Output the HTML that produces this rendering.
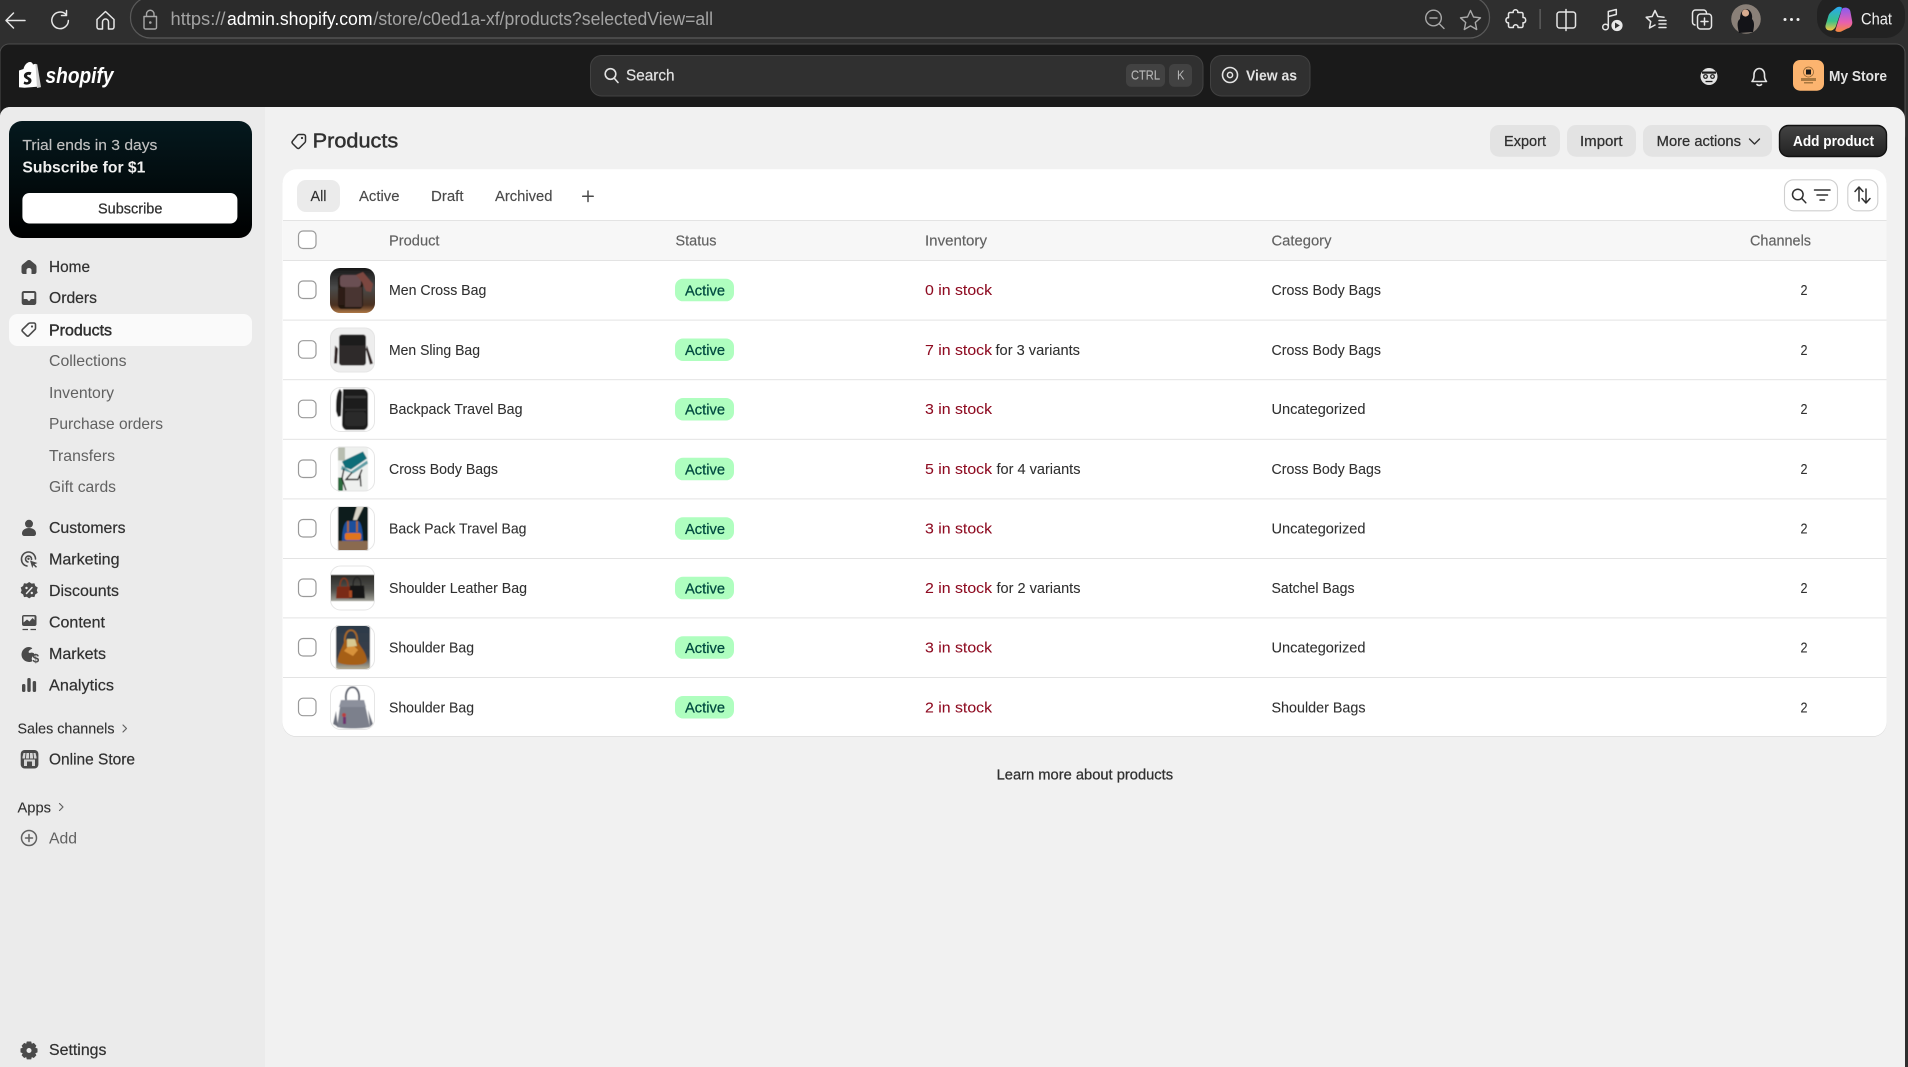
<!DOCTYPE html>
<html><head><meta charset="utf-8"><title>Products</title>
<style>
html,body{margin:0;padding:0;background:#2f2f2f;width:1908px;height:1067px;overflow:hidden}
svg{display:block}
text{font-family:"Liberation Sans",sans-serif;fill:#303030;white-space:pre}
.nav{font-size:15.6px;fill:#303030;stroke:#303030;stroke-width:.2}
.sub{font-size:15.6px;fill:#616161}
.th{font-size:14.5px;fill:#616161;stroke:#616161;stroke-width:.15}
.td{font-size:14.5px;fill:#303030;stroke:#303030;stroke-width:.08}
.inv{font-size:14.5px;fill:#8e0b21;stroke:#8e0b21;stroke-width:.05}
.bd{font-size:14.5px;fill:#014b40;stroke:#014b40;stroke-width:.25}
.btn{font-size:14.5px;fill:#303030;stroke:#303030;stroke-width:.25}
.tab{font-size:14.5px;fill:#4a4a4a;stroke:#4a4a4a;stroke-width:.15}
.ic{fill:#4a4a4a}
.ol{fill:none;stroke:#4a4a4a;stroke-width:1.6;stroke-linecap:round;stroke-linejoin:round}
.br{fill:none;stroke:#e6e6e6;stroke-width:1.5;stroke-linecap:round;stroke-linejoin:round}
.br2{fill:none;stroke:#a8a8a8;stroke-width:1.4;stroke-linecap:round;stroke-linejoin:round}
.wh{fill:none;stroke:#e3e3e3;stroke-width:1.6;stroke-linecap:round;stroke-linejoin:round}
</style></head><body>
<svg xmlns="http://www.w3.org/2000/svg" width="1908" height="1067" viewBox="0 0 1908 1067">
<defs>
<linearGradient id="card" x1="0" y1="0" x2="0" y2="1"><stop offset="0" stop-color="#05191e"/><stop offset="1" stop-color="#000"/></linearGradient>
<linearGradient id="addb" x1="0" y1="0" x2="0" y2="1"><stop offset="0" stop-color="#444"/><stop offset="1" stop-color="#222"/></linearGradient>
<linearGradient id="cop1" x1="0" y1="0" x2="0" y2="1"><stop offset="0" stop-color="#2aa7f0"/><stop offset=".6" stop-color="#37c28a"/><stop offset="1" stop-color="#f5c542"/></linearGradient>
<linearGradient id="cop2" x1="0" y1="0" x2="0" y2="1"><stop offset="0" stop-color="#8a5cf0"/><stop offset=".6" stop-color="#e85fb0"/><stop offset="1" stop-color="#f58a3c"/></linearGradient>
<linearGradient id="t1bg" x1="0" y1="0" x2="0" y2="1"><stop offset="0" stop-color="#141414"/><stop offset=".45" stop-color="#4a4a4a"/><stop offset=".8" stop-color="#4a3020"/><stop offset="1" stop-color="#c98a50"/></linearGradient>
<linearGradient id="t7bg" x1="0" y1="0" x2="0" y2="1"><stop offset="0" stop-color="#2c3a4a"/><stop offset=".7" stop-color="#3a4048"/><stop offset="1" stop-color="#c0b8a0"/></linearGradient>
<linearGradient id="t6bg" x1="0" y1="0" x2="0" y2="1"><stop offset="0" stop-color="#2a2a28"/><stop offset=".6" stop-color="#555550"/><stop offset="1" stop-color="#a0a098"/></linearGradient>
<clipPath id="tc"><rect width="45" height="45" rx="10"/></clipPath>
<filter id="bl" x="-5%" y="-5%" width="110%" height="110%"><feGaussianBlur stdDeviation=".6"/></filter>
<g id="cb"><rect x="298.5" y="-9" width="17.5" height="17.5" rx="4.5" fill="#fff" stroke="#9a9a9a" stroke-width="1.2"/></g>
<g id="badge"><rect x="675" y="-11.2" width="59" height="22.5" rx="8" fill="#affebf"/><text class="bd" x="685" y="5.3" textLength="40" lengthAdjust="spacingAndGlyphs">Active</text></g>
<rect id="tb" x=".5" y=".5" width="44" height="44" rx="10" fill="none" stroke="#e6e6e6"/>
</defs>

<!-- browser chrome -->
<rect width="1908" height="1067" fill="#2f2f2f"/>
<rect x="130.5" y="-3" width="1359" height="41" rx="20" fill="#2b2b2b" stroke="#5a5a5a" stroke-width="1.2"/>
<path class="br" d="M6 20.5H25M6 20.5l7.5-7.5M6 20.5l7.5 7.5"/>
<path class="br" d="M66 14.5a8.3 8.3 0 1 0 2.4 6M66.5 10.5v5h-5"/>
<path class="br" d="M97 19.5l8.5-8 8.5 8v7.5a2 2 0 0 1-2 2h-3.5v-7a3 3 0 0 0-6 0v7H99a2 2 0 0 1-2-2z"/>
<path class="br2" d="M144 16.5h12.5v11a1.5 1.5 0 0 1-1.500 1.500h-9.500a1.500 1.500 0 0 1-1.500-1.500zM146.500 16.500v-2.500a3.700 3.700 0 0 1 7.500 0v2.500"/>
<circle cx="150.300" cy="22.500" r="1.300" fill="#a8a8a8"/>
<text x="170.500" y="25" font-size="18" style="fill:#a3a3a3" textLength="55" lengthAdjust="spacingAndGlyphs">https://</text>
<text x="227" y="25" font-size="18" style="fill:#fff" textLength="145.500" lengthAdjust="spacingAndGlyphs">admin.shopify.com</text>
<text x="373.500" y="25" font-size="18" style="fill:#a3a3a3" textLength="339.500" lengthAdjust="spacingAndGlyphs">/store/c0ed1a-xf/products?selectedView=all</text>
<circle cx="1433.500" cy="18" r="7.800" class="br2"/><path class="br2" d="M1439.500 24l4.500 4.500M1430 18h7"/>
<path class="br2" d="M1470.500 10.500l3 6.500 7 .8-5.200 4.700 1.400 7-6.200-3.600-6.200 3.600 1.400-7-5.200-4.700 7-.8z"/>
<path class="br" d="M1511 13.500h3.200c-.7-3.600 5.300-3.600 4.600 0h3.700c.8 0 1.500.7 1.500 1.500v3.500c3.600-.7 3.600 6 0 5.200v3.300c0 .8-.7 1.500-1.500 1.500h-3.500c.6-3.600-5.300-3.600-4.600 0h-3.400c-.8 0-1.500-.7-1.500-1.500v-3.200c-3.400.6-3.400-5.800 0-5.100V15c0-.8.700-1.500 1.500-1.500z" transform="translate(-1 -1)"/>
<rect x="1539.500" y="9" width="1.200" height="20" fill="#666"/>
<rect x="1557" y="12" width="18.500" height="16" rx="2.500" class="br"/><path class="br" d="M1566 9.500v21"/>
<circle cx="1605.500" cy="27" r="2.800" class="br"/><path class="br" d="M1608.300 27V11.500l8-2v5l-8 2"/>
<circle cx="1617" cy="25.500" r="5.600" fill="#e8e8e8"/><path d="M1615 22.500v6l4.800-3z" fill="#2f2f2f"/>
<path class="br" d="M1655 10.500l2.800 6 6.200.8M1655 10.500l-2.800 6-6 .8 4.500 4.300-1.200 6.400 5.500-3"/><path class="br" d="M1659 20.500h7M1659 24h7M1659 27.500h7"/>
<path class="br" d="M1695 25a3 3 0 0 1-2.500-3v-9a3 3 0 0 1 3-3h8a3 3 0 0 1 3 3"/><rect x="1697.500" y="14" width="14" height="15" rx="3" class="br"/><path class="br" d="M1704.500 18v7M1701 21.500h7"/>
<circle cx="1746" cy="19" r="14.800" fill="#8a8078"/><path d="M1739 33c-2-8-2-12 1-14 0-5 2-10 6-10s7 5 6 10c3 3 2 8 1 13z" fill="#141418"/><circle cx="1745.500" cy="13" r="3.600" fill="#d8ac90"/>
<circle cx="1785" cy="19.500" r="1.500" fill="#eee"/><circle cx="1791.500" cy="19.500" r="1.500" fill="#eee"/><circle cx="1798" cy="19.500" r="1.500" fill="#eee"/>
<rect x="1817" y="-6" width="88" height="44" rx="19" fill="#222"/>
<path d="M1836 8c1.500-1.500 5-1.800 6 0l-6 18c-1 3-4 5-6 4.500-3 0-5-2-4.500-5l3-10c1-3 4-4.500 7.500-7.500z" fill="url(#cop1)"/>
<path d="M1843 8c3-1 7 0 7.500 4l1.800 10c.3 3-2 6-5 6.500l-6 3c-2 .8-5 .5-6-1l5-16c.8-2.500 1-5.500 2.700-6.500z" fill="url(#cop2)"/>
<text x="1861" y="24.500" font-size="16.500" style="fill:#f0f0f0" textLength="31" lengthAdjust="spacingAndGlyphs">Chat</text>

<!-- admin header -->
<rect x="0" y="44" width="1905" height="100" rx="9" fill="#1a1a1a" stroke="#4c4c4c" stroke-width="1"/>
<path d="M19 70.500l4.500-1.500c.8-3.500 3-6.500 6-7 2-.2 3 1 3.500 2.500l2.500-.7 4.500 22.700-15.500 1.300-5.500-.6z" fill="#fff"/>
<path d="M35.500 64l1.500 24 4-.9-3.800-22.900z" fill="#cfcfcf"/>
<path d="M31.500 72.500c-.8-.4-1.800-.6-2.800-.6-3 0-4.800 2-4.800 4 0 3 4.500 3.200 4.500 5 0 .8-.8 1.300-1.600 1.300-1.200 0-2.500-.8-2.500-.8l-.7 2.300s1.300.9 3.300.9c2.800 0 4.600-1.800 4.600-4.100 0-3.200-4.400-3.400-4.400-4.800 0-.4.300-1 1.400-1 .9 0 1.700.4 1.700.4z" fill="#1a1a1a"/>
<text x="45.500" y="83" font-size="22" font-weight="700" font-style="italic" style="fill:#fff" textLength="68" lengthAdjust="spacingAndGlyphs">shopify</text>

<rect x="590.500" y="55.500" width="612.500" height="40.500" rx="11" fill="#303030" stroke="#424242"/>
<circle cx="610.500" cy="74" r="5.300" fill="none" stroke="#e3e3e3" stroke-width="1.600"/><path class="wh" d="M614.500 78.500l3.500 4"/>
<text x="626" y="80.300" font-size="15.500" style="fill:#e3e3e3;stroke:#e3e3e3;stroke-width:.2" textLength="48.500" lengthAdjust="spacingAndGlyphs">Search</text>
<rect x="1126" y="64" width="39" height="22.700" rx="5" fill="#424242"/>
<text x="1131" y="79.500" font-size="12.500" style="fill:#b5b5b5;stroke:#b5b5b5;stroke-width:.15" textLength="29" lengthAdjust="spacingAndGlyphs">CTRL</text>
<rect x="1169" y="64" width="23" height="22.700" rx="5" fill="#424242"/>
<text x="1177" y="79.500" font-size="12.500" style="fill:#b5b5b5" textLength="7.500" lengthAdjust="spacingAndGlyphs">K</text>
<rect x="1210.500" y="55.500" width="99.500" height="40.500" rx="11" fill="#303030" stroke="#424242"/>
<circle cx="1230" cy="75" r="7.500" fill="none" stroke="#e3e3e3" stroke-width="1.600"/><circle cx="1230" cy="75" r="2.600" fill="none" stroke="#e3e3e3" stroke-width="1.500"/>
<text x="1246" y="80.300" font-size="14.500" font-weight="700" style="fill:#e3e3e3" textLength="51" lengthAdjust="spacingAndGlyphs">View as</text>

<path d="M1709 68c-4.700 0-8.500 3.800-8.500 8.500s3.800 8.500 8.500 8.500 8.500-3.800 8.500-8.500-3.800-8.500-8.500-8.500z" fill="#e3e3e3"/><path d="M1702 71.500h14v2.200h-14z" fill="#1a1a1a"/><circle cx="1705.500" cy="76.500" r="2.400" fill="#1a1a1a"/><circle cx="1712.500" cy="76.500" r="2.400" fill="#1a1a1a"/><circle cx="1705.500" cy="76.500" r="1.200" fill="#e3e3e3"/><circle cx="1712.500" cy="76.500" r="1.200" fill="#e3e3e3"/><path d="M1705.500 81.500h7" stroke="#1a1a1a" stroke-width="1.300"/>
<path class="wh" d="M1752 81.500h14.500c-1.500-1.800-2-3-2-5.500v-1.500c0-3.200-2.200-6-5.200-6s-5.300 2.800-5.300 6V76c0 2.500-.5 3.700-2 5.500z"/><path class="wh" d="M1757 84.500c1.200 1.200 3.300 1.200 4.500 0"/>
<rect x="1793" y="60" width="31" height="30.700" rx="7" fill="#fcb46f"/>
<circle cx="1808.500" cy="72" r="5" fill="none" stroke="#8a6030" stroke-width=".7"/><rect x="1806" y="69.500" width="5" height="5" fill="#1a1a1a"/><rect x="1801" y="78" width="15" height="3" fill="#a87840"/><rect x="1804" y="82" width="9" height="1.500" fill="#a87840"/>
<text x="1829" y="81" font-size="14.500" font-weight="700" style="fill:#e3e3e3" textLength="58" lengthAdjust="spacingAndGlyphs">My Store</text>

<!-- content -->
<path d="M0 117a10 10 0 0 1 10-10H1893a12 12 0 0 1 12 12V1067H0z" fill="#f1f1f1"/>
<path d="M0 117a10 10 0 0 1 10-10H265V1067H0z" fill="#ebebeb"/>

<!-- trial card -->
<rect x="9" y="121" width="243" height="117" rx="13" fill="url(#card)"/>
<text x="22.400" y="150" font-size="15.200" style="fill:#c0c0c0;stroke:#c0c0c0;stroke-width:.15" textLength="135" lengthAdjust="spacingAndGlyphs">Trial ends in 3 days</text>
<text x="22.400" y="172.500" font-size="15.600" font-weight="700" style="fill:#f0f0f0" textLength="123" lengthAdjust="spacingAndGlyphs">Subscribe for $1</text>
<rect x="22.400" y="193" width="215" height="30.500" rx="7" fill="#fff"/>
<text x="98" y="213.300" class="btn" textLength="64.400" lengthAdjust="spacingAndGlyphs">Subscribe</text>

<!-- sidebar -->
<rect x="9" y="314" width="243" height="32" rx="8.500" fill="#fafafa"/>
<text class="nav" x="49" y="271.800" textLength="41" lengthAdjust="spacingAndGlyphs">Home</text>
<text class="nav" x="49" y="303" textLength="48" lengthAdjust="spacingAndGlyphs">Orders</text>
<text class="nav" x="49" y="335.500" textLength="63" lengthAdjust="spacingAndGlyphs" style="stroke-width:.45">Products</text>
<text class="sub" x="49" y="366" textLength="77.500" lengthAdjust="spacingAndGlyphs">Collections</text>
<text class="sub" x="49" y="398" textLength="65" lengthAdjust="spacingAndGlyphs">Inventory</text>
<text class="sub" x="49" y="429" textLength="114" lengthAdjust="spacingAndGlyphs">Purchase orders</text>
<text class="sub" x="49" y="461" textLength="66" lengthAdjust="spacingAndGlyphs">Transfers</text>
<text class="sub" x="49" y="492.200" textLength="67" lengthAdjust="spacingAndGlyphs">Gift cards</text>
<text class="nav" x="49" y="533" textLength="76.500" lengthAdjust="spacingAndGlyphs">Customers</text>
<text class="nav" x="49" y="564.300" textLength="70.500" lengthAdjust="spacingAndGlyphs">Marketing</text>
<text class="nav" x="49" y="596" textLength="70" lengthAdjust="spacingAndGlyphs">Discounts</text>
<text class="nav" x="49" y="627.300" textLength="56" lengthAdjust="spacingAndGlyphs">Content</text>
<text class="nav" x="49" y="659" textLength="57" lengthAdjust="spacingAndGlyphs">Markets</text>
<text class="nav" x="49" y="690.300" textLength="65" lengthAdjust="spacingAndGlyphs">Analytics</text>
<text class="nav" x="17.500" y="733.300" style="font-size:14.500px;stroke-width:.1" textLength="97" lengthAdjust="spacingAndGlyphs">Sales channels</text>
<path d="M123 725l3.500 3.500-3.500 3.500" fill="none" stroke="#616161" stroke-width="1.200" stroke-linecap="round" stroke-linejoin="round"/>
<text class="nav" x="49" y="764.300" textLength="86" lengthAdjust="spacingAndGlyphs">Online Store</text>
<text class="nav" x="17.500" y="812.300" style="font-size:14.500px;stroke-width:.1" textLength="33.500" lengthAdjust="spacingAndGlyphs">Apps</text>
<path d="M59.500 803.500l3.500 3.500-3.500 3.500" fill="none" stroke="#616161" stroke-width="1.200" stroke-linecap="round" stroke-linejoin="round"/>
<text class="sub" x="49" y="843.300" textLength="28" lengthAdjust="spacingAndGlyphs">Add</text>
<text class="nav" x="49" y="1055" textLength="57.500" lengthAdjust="spacingAndGlyphs">Settings</text>

<!-- sidebar icons -->
<path class="ic" d="M29 260c-.8 0-1.400.3-1.900.7l-4.300 3.500c-.8.6-1.300 1.500-1.300 2.600v5.200c0 1.100.9 2 2 2h3v-4c0-1.100 1-2 2.500-2s2.500.9 2.500 2v4h3c1.100 0 2-.9 2-2v-5.200c0-1.100-.5-2-1.300-2.600l-4.300-3.500c-.5-.4-1.100-.7-1.900-.7z"/>
<path class="ic" fill-rule="evenodd" d="M24 291h10c1.300 0 2.300 1 2.300 2.300v9.400c0 1.300-1 2.300-2.300 2.300H24c-1.300 0-2.300-1-2.300-2.300v-9.400c0-1.300 1-2.300 2.300-2.300zm-.3 2v6h2.800c.6 0 1 .4 1.200.9.200.6.700 1 1.300 1s1.100-.4 1.300-1c.2-.5.600-.9 1.200-.9h2.800v-6z"/>
<path class="ol" d="M30.800 324h3.600c.9 0 1.600.7 1.600 1.600v3.600c0 .6-.2 1-.6 1.400l-6 6c-.7.600-1.700.600-2.300 0l-4-4c-.6-.6-.6-1.600 0-2.300l6-5.800c.6-.4 1-.5 1.700-.5z" transform="translate(-.5 -1)"/>
<circle class="ic" cx="32" cy="326.500" r="1.100"/>
<circle class="ic" cx="29" cy="523.800" r="4"/><path class="ic" d="M22 533.500c0-3.500 3-5.500 7-5.500s7 2 7 5.500c0 1.500-1 2.500-2.500 2.500h-9c-1.500 0-2.500-1-2.500-2.500z"/>
<path class="ol" d="M27 566c-3.500-.6-5.500-3.300-5.500-7a7 7 0 0 1 14 0M31.500 559.500a3 3 0 1 0-3.500 2.500" stroke-width="1.700"/>
<circle class="ic" cx="28.500" cy="558.800" r="1.200"/><path class="ic" d="M30 560.500l7.500 2.500-3 1.300 2.500 2.500-1 1-2.700-2.500-1 2.800z"/>
<path class="ic" d="M29.200 582l2.400 1.600 2.800-.3.900 2.700 2.400 1.500-.9 2.700.9 2.700-2.400 1.500-.9 2.700-2.800-.3-2.400 1.600-2.400-1.600-2.800.3-.9-2.700-2.400-1.500.9-2.700-.9-2.700 2.400-1.500.9-2.700 2.800.3z"/>
<path d="M26.500 593.500l5.500-6" stroke="#ebebeb" stroke-width="1.500" stroke-linecap="round"/><circle cx="26.500" cy="588" r="1.200" fill="#ebebeb"/><circle cx="31.800" cy="593" r="1.200" fill="#ebebeb"/>
<rect class="ic" x="22" y="615" width="14.500" height="11" rx="2"/><path d="M23.500 622.500l3.500-3 2.500 2 3-3.500 2 2v-3.500h-11z" fill="#ebebeb"/><path d="M22.500 629.500h5.500M30.500 629.500h5.500" stroke="#4a4a4a" stroke-width="1.300"/>
<path class="ic" d="M29 647a7.500 7.500 0 0 0 0 15c1.500 0 2.500-.3 3.500-1-.8-1.200-1-2.500-.5-3.500.5-1.300 1.800-1.700 2.300-2.800.4-1-.4-1.800-1.800-2-1.500-.3-2.500.6-3.500 0-1-.7 0-2 1-2.800 1-.9 2-1 2.300-1.500-.8-1-2-1.400-3.300-1.400z"/>
<text x="32.500" y="662.500" font-size="12" font-weight="700" style="fill:#4a4a4a">$</text>
<rect class="ic" x="22" y="684" width="3.400" height="8" rx="1.500"/><rect class="ic" x="27.300" y="678" width="3.400" height="14" rx="1.500"/><rect class="ic" x="32.700" y="681" width="3.400" height="11" rx="1.500"/>
<rect class="ic" x="20.700" y="750" width="17.700" height="18.500" rx="4"/><path d="M23.500 753h12l1 4v1.500h-14V757zM24 759.500h11v6.500h-3v-4.500h-5v4.500h-3z" fill="#d6d6d6"/><path d="M26 753l-.6 5.500M29.500 753v5.500M33 753l.6 5.500" stroke="#4a4a4a" stroke-width=".9"/>
<circle cx="29" cy="838" r="7.500" fill="none" stroke="#616161" stroke-width="1.500"/><path d="M29 834.500v7M25.500 838h7" stroke="#616161" stroke-width="1.500" stroke-linecap="round"/>
<path class="ic" fill-rule="evenodd" d="M26.800 1041.500h4.400l.6 2.300 2-.9 2.600 2.800-1.100 2 2.200.8v3.900l-2.200.8 1.100 2-2.600 2.800-2-.9-.6 2.300h-4.400l-.6-2.300-2 .9-2.600-2.800 1.100-2-2.200-.8v-3.900l2.200-.8-1.100-2 2.600-2.800 2 .9zm2.200 6.500a2.500 2.500 0 1 0 0 5 2.500 2.500 0 0 0 0-5z"/>

<!-- page header -->
<path d="M299 134.500h4.600c1 0 1.900.9 1.900 1.900v4.600c0 .6-.2 1.100-.6 1.500l-5.400 5.400c-.8.700-1.900.7-2.600 0l-4.300-4.300c-.7-.8-.7-1.900 0-2.600l4.900-5.900c.4-.4.900-.6 1.500-.6z" fill="none" stroke="#303030" stroke-width="1.500" stroke-linejoin="round"/>
<circle cx="302" cy="138" r="1.100" fill="#303030"/>
<text x="312.700" y="147.500" font-size="20" style="fill:#303030;stroke:#303030;stroke-width:.45" textLength="85.500" lengthAdjust="spacingAndGlyphs">Products</text>

<rect x="1490" y="125" width="70" height="31.700" rx="9" fill="#e3e3e3"/>
<text class="btn" x="1504" y="146" textLength="42" lengthAdjust="spacingAndGlyphs">Export</text>
<rect x="1567" y="125" width="69" height="31.700" rx="9" fill="#e3e3e3"/>
<text class="btn" x="1580" y="146" textLength="42.600" lengthAdjust="spacingAndGlyphs">Import</text>
<rect x="1643" y="125" width="129" height="31.700" rx="9" fill="#e3e3e3"/>
<text class="btn" x="1656.700" y="146" textLength="84.300" lengthAdjust="spacingAndGlyphs">More actions</text>
<path d="M1749.500 139l5 5 5-5" fill="none" stroke="#303030" stroke-width="1.400" stroke-linecap="round" stroke-linejoin="round"/>
<rect x="1779.500" y="125.500" width="107" height="31" rx="9" fill="url(#addb)" stroke="#111" stroke-width="1.400"/>
<text x="1793" y="146" font-size="14.500" font-weight="700" style="fill:#fff" textLength="81" lengthAdjust="spacingAndGlyphs">Add product</text>

<!-- card -->
<rect x="282.500" y="170" width="1604" height="567" rx="14" fill="#d9d9d9"/>
<rect x="282.500" y="169.300" width="1604" height="567" rx="14" fill="#fff"/>
<rect x="297" y="180" width="43" height="32" rx="9" fill="#ebebeb"/>
<text class="tab" style="fill:#303030;stroke:#303030" x="310.500" y="201" textLength="16" lengthAdjust="spacingAndGlyphs">All</text>
<text class="tab" x="359" y="201" textLength="40.500" lengthAdjust="spacingAndGlyphs">Active</text>
<text class="tab" x="431" y="201" textLength="32.500" lengthAdjust="spacingAndGlyphs">Draft</text>
<text class="tab" x="495" y="201" textLength="57.500" lengthAdjust="spacingAndGlyphs">Archived</text>
<path d="M588 191v10.500M582.700 196.200h10.500" stroke="#4a4a4a" stroke-width="1.500" stroke-linecap="round"/>

<rect x="1784.500" y="179.800" width="53" height="31" rx="9" fill="#fff" stroke="#cfcfcf" stroke-width="1.100"/>
<circle cx="1797.800" cy="194.500" r="5.300" fill="none" stroke="#303030" stroke-width="1.500"/><path d="M1801.800 198.500l4 4.300" stroke="#303030" stroke-width="1.500" stroke-linecap="round"/>
<path d="M1814.500 190h15.500M1817 195h10.500M1820 200h4.500" stroke="#303030" stroke-width="1.500" stroke-linecap="round"/>
<rect x="1847.800" y="179.800" width="30" height="31" rx="9" fill="#fff" stroke="#cfcfcf" stroke-width="1.100"/>
<path d="M1859 201v-13.500M1855 191.500l4-4.500 4 4.500M1866 189v13.500M1862 198.500l4 4.500 4-4.500" fill="none" stroke="#303030" stroke-width="1.500" stroke-linecap="round" stroke-linejoin="round"/>

<rect x="283" y="220" width="1603.500" height="40.700" fill="#f7f7f7"/>
<rect x="283" y="220" width="1603.500" height="1" fill="#e3e3e3"/>
<rect x="283" y="260" width="1603.500" height="1" fill="#e3e3e3"/>
<rect x="283" y="319.600" width="1603.500" height="1" fill="#e3e3e3"/>
<rect x="283" y="379.200" width="1603.500" height="1" fill="#e3e3e3"/>
<rect x="283" y="438.800" width="1603.500" height="1" fill="#e3e3e3"/>
<rect x="283" y="498.400" width="1603.500" height="1" fill="#e3e3e3"/>
<rect x="283" y="558" width="1603.500" height="1" fill="#e3e3e3"/>
<rect x="283" y="617.400" width="1603.500" height="1" fill="#e3e3e3"/>
<rect x="283" y="677" width="1603.500" height="1" fill="#e3e3e3"/>

<use href="#cb" y="240"/>
<text class="th" x="389" y="245.300" textLength="50.500" lengthAdjust="spacingAndGlyphs">Product</text>
<text class="th" x="675.500" y="245.300" textLength="41" lengthAdjust="spacingAndGlyphs">Status</text>
<text class="th" x="925" y="245.300" textLength="62" lengthAdjust="spacingAndGlyphs">Inventory</text>
<text class="th" x="1271.500" y="245.300" textLength="60" lengthAdjust="spacingAndGlyphs">Category</text>
<text class="th" x="1750" y="245.300" textLength="61" lengthAdjust="spacingAndGlyphs">Channels</text>

<!-- rows -->
<g>
<use href="#cb" y="290"/><use href="#badge" y="290"/>
<text class="td" x="389" y="295" textLength="97.300" lengthAdjust="spacingAndGlyphs">Men Cross Bag</text>
<text class="inv" x="925" y="295" textLength="67" lengthAdjust="spacingAndGlyphs">0 in stock</text>
<text class="td" x="1271.500" y="295" textLength="109.500" lengthAdjust="spacingAndGlyphs">Cross Body Bags</text>
<text class="td" x="1800.500" y="295" textLength="7" lengthAdjust="spacingAndGlyphs">2</text>
</g>
<g>
<use href="#cb" y="349.700"/><use href="#badge" y="349.700"/>
<text class="td" x="389" y="355" textLength="91" lengthAdjust="spacingAndGlyphs">Men Sling Bag</text>
<text class="inv" x="925" y="355" textLength="67" lengthAdjust="spacingAndGlyphs">7 in stock</text>
<text class="td" x="995.500" y="355" textLength="84.500" lengthAdjust="spacingAndGlyphs">for 3 variants</text>
<text class="td" x="1271.500" y="355" textLength="109.500" lengthAdjust="spacingAndGlyphs">Cross Body Bags</text>
<text class="td" x="1800.500" y="355" textLength="7" lengthAdjust="spacingAndGlyphs">2</text>
</g>
<g>
<use href="#cb" y="409.200"/><use href="#badge" y="409.200"/>
<text class="td" x="389" y="414.200" textLength="133.500" lengthAdjust="spacingAndGlyphs">Backpack Travel Bag</text>
<text class="inv" x="925" y="414.200" textLength="67" lengthAdjust="spacingAndGlyphs">3 in stock</text>
<text class="td" x="1271.500" y="414.200" textLength="94" lengthAdjust="spacingAndGlyphs">Uncategorized</text>
<text class="td" x="1800.500" y="414.200" textLength="7" lengthAdjust="spacingAndGlyphs">2</text>
</g>
<g>
<use href="#cb" y="469"/><use href="#badge" y="469"/>
<text class="td" x="389" y="474" textLength="109" lengthAdjust="spacingAndGlyphs">Cross Body Bags</text>
<text class="inv" x="925" y="474" textLength="67" lengthAdjust="spacingAndGlyphs">5 in stock</text>
<text class="td" x="996.500" y="474" textLength="84" lengthAdjust="spacingAndGlyphs">for 4 variants</text>
<text class="td" x="1271.500" y="474" textLength="109.500" lengthAdjust="spacingAndGlyphs">Cross Body Bags</text>
<text class="td" x="1800.500" y="474" textLength="7" lengthAdjust="spacingAndGlyphs">2</text>
</g>
<g>
<use href="#cb" y="528.500"/><use href="#badge" y="528.500"/>
<text class="td" x="389" y="533.500" textLength="137.500" lengthAdjust="spacingAndGlyphs">Back Pack Travel Bag</text>
<text class="inv" x="925" y="533.500" textLength="67" lengthAdjust="spacingAndGlyphs">3 in stock</text>
<text class="td" x="1271.500" y="533.500" textLength="94" lengthAdjust="spacingAndGlyphs">Uncategorized</text>
<text class="td" x="1800.500" y="533.500" textLength="7" lengthAdjust="spacingAndGlyphs">2</text>
</g>
<g>
<use href="#cb" y="588"/><use href="#badge" y="588"/>
<text class="td" x="389" y="593" textLength="138" lengthAdjust="spacingAndGlyphs">Shoulder Leather Bag</text>
<text class="inv" x="925" y="593" textLength="67" lengthAdjust="spacingAndGlyphs">2 in stock</text>
<text class="td" x="996.500" y="593" textLength="84" lengthAdjust="spacingAndGlyphs">for 2 variants</text>
<text class="td" x="1271.500" y="593" textLength="83" lengthAdjust="spacingAndGlyphs">Satchel Bags</text>
<text class="td" x="1800.500" y="593" textLength="7" lengthAdjust="spacingAndGlyphs">2</text>
</g>
<g>
<use href="#cb" y="647.500"/><use href="#badge" y="647.500"/>
<text class="td" x="389" y="652.600" textLength="85" lengthAdjust="spacingAndGlyphs">Shoulder Bag</text>
<text class="inv" x="925" y="652.600" textLength="67" lengthAdjust="spacingAndGlyphs">3 in stock</text>
<text class="td" x="1271.500" y="652.600" textLength="94" lengthAdjust="spacingAndGlyphs">Uncategorized</text>
<text class="td" x="1800.500" y="652.600" textLength="7" lengthAdjust="spacingAndGlyphs">2</text>
</g>
<g>
<use href="#cb" y="707.200"/><use href="#badge" y="707.200"/>
<text class="td" x="389" y="712.500" textLength="85" lengthAdjust="spacingAndGlyphs">Shoulder Bag</text>
<text class="inv" x="925" y="712.500" textLength="67" lengthAdjust="spacingAndGlyphs">2 in stock</text>
<text class="td" x="1271.500" y="712.500" textLength="94" lengthAdjust="spacingAndGlyphs">Shoulder Bags</text>
<text class="td" x="1800.500" y="712.500" textLength="7" lengthAdjust="spacingAndGlyphs">2</text>
</g>

<!-- thumbnails -->
<g transform="translate(330,268)"><g clip-path="url(#tc)"><g filter="url(#bl)">
<rect x="-2" y="-2" width="49" height="49" fill="url(#t1bg)"/>
<rect x="8" y="7" width="25" height="34" rx="4" fill="#221311"/>
<rect x="10" y="7" width="21" height="12" rx="3" fill="#6a5052"/>
<rect x="15" y="19" width="17" height="20" fill="#4a3432"/>
<rect x="9" y="20" width="5" height="17" fill="#2e1a18"/>
<path d="M26 7l7-3 10 12-2 8-5-1-4-9z" fill="#7c4640"/>
</g></g></g>
<g transform="translate(330,327.500)"><g clip-path="url(#tc)"><g filter="url(#bl)">
<rect x="-2" y="-2" width="49" height="49" fill="#eeeeee"/>
<path d="M5 18l-1 18 3 0 1-15zM37 18l6 18-3 1-4-15z" fill="#2a1f1f"/>
<rect x="9" y="7" width="27" height="31" rx="3" fill="#2e2a2a"/>
<rect x="10" y="8" width="25" height="10" rx="2" fill="#1e1c1c"/>
</g></g><use href="#tb"/></g>
<g transform="translate(330,387)"><g clip-path="url(#tc)"><g filter="url(#bl)">
<rect x="-2" y="-2" width="49" height="49" fill="#fff"/>
<path d="M10 2c-4 3-4 14-4 22l2 6 3-1 1-24z" fill="#1a1a1a"/>
<path d="M13 2h20c3 0 5 3 5 6v29c0 3-2 6-5 6H17c-3 0-5-3-5-6z" fill="#1f1f1f"/>
<rect x="15" y="25" width="21" height="14" rx="3" fill="#2c2c2c"/>
<rect x="15" y="9" width="21" height="2" fill="#3a3a3a"/>
<rect x="15" y="22" width="21" height="1.500" fill="#333"/>
</g></g><use href="#tb"/></g>
<g transform="translate(330,446.500)"><g clip-path="url(#tc)"><g filter="url(#bl)">
<rect x="-2" y="-2" width="49" height="49" fill="#fff"/>
<rect x="8" y="0" width="30" height="45" fill="#eef0ee"/>
<rect x="8" y="0" width="7" height="14" fill="#b8bdb0"/>
<rect x="8" y="31" width="5" height="14" fill="#2a6b3c"/>
<path d="M12 15l21-10 4 7-16 11-6-2z" fill="#0e6d78"/>
<path d="M12 19l9 6 16-11 1 3-15 10-12-4z" fill="#5f9ea6"/>
<path d="M14 22l-2 10 4 12M22 26l-6 7 12 0 4-10M30 28l1 12" stroke="#222" stroke-width="1.400" fill="none"/>
</g></g><use href="#tb"/></g>
<g transform="translate(330,506)"><g clip-path="url(#tc)"><g filter="url(#bl)">
<rect x="-2" y="-2" width="49" height="49" fill="#fff"/>
<rect x="8" y="0" width="30" height="45" fill="#0f1e1a"/>
<path d="M27 0h7l-7 14h-4z" fill="#d8d4c8"/>
<rect x="8" y="35" width="30" height="10" fill="#8a6a50"/>
<path d="M12 35c0-10 2-20 6-20h10c3 0 5 10 5 20z" fill="#1b4f9c"/>
<rect x="15" y="27" width="16" height="7" rx="2" fill="#e0741c"/>
<path d="M18 15v11M27 15v11" stroke="#c06a20" stroke-width="1.600"/>
</g></g><use href="#tb"/></g>
<g transform="translate(330,565.500)"><rect x=".5" y=".5" width="44" height="44" rx="10" fill="#fff"/><g clip-path="url(#tc)"><g filter="url(#bl)">
<rect x="0" y="9.500" width="45" height="26" fill="url(#t6bg)"/>
<path d="M7 21h14l2 12H6z" fill="#7a2c18"/>
<path d="M10 21c0-11 8-11 8 0" fill="none" stroke="#8a3a1c" stroke-width="1.300"/>
<path d="M20 20h14l1 13H19z" fill="#141414"/>
<path d="M23 20c0-11 8-11 8 0" fill="none" stroke="#222" stroke-width="1.300"/>
<rect x="19" y="25" width="3" height="7" fill="#a84820"/>
</g></g><use href="#tb"/></g>
<g transform="translate(330,625)"><g clip-path="url(#tc)"><g filter="url(#bl)">
<rect x="-2" y="-2" width="49" height="49" fill="#fff"/>
<rect x="6" y="0" width="34" height="45" fill="url(#t7bg)"/>
<path d="M15 18c-2-17 14-17 12 0" fill="none" stroke="#a86a28" stroke-width="1.800"/>
<path d="M15 15l12 0c3 7 9 11 10 21-2 3-5 4-13 4s-14-1-16-3c-1-5 4-14 7-22z" fill="#a65f15"/>
<path d="M14 26l7-8 7 7-5 6z" fill="#d8923a"/>
<path d="M17 14l8 0 2 7-10 1z" fill="#d8c890"/>
</g></g><use href="#tb"/></g>
<g transform="translate(330,685)"><g clip-path="url(#tc)"><g filter="url(#bl)">
<rect x="-2" y="-2" width="49" height="49" fill="#fff"/>
<path d="M16 15c-2-17 15-17 13 0" fill="none" stroke="#5a5f6c" stroke-width="2"/>
<path d="M11 15h23l6 27c-8 2-26 2-33 0z" fill="#7c808c"/>
<path d="M11 15h23l2 7H9z" fill="#8c909c"/>
<path d="M6 26l-3 13 5 3zM38 25l5 14-3 3z" fill="#6c707c"/>
<circle cx="14" cy="30" r="2" fill="#b84040"/><rect x="13" y="32" width="3" height="7" fill="#703070"/>
</g></g><use href="#tb"/></g>

<text x="996.600" y="779.300" font-size="14.500" style="fill:#303030;stroke:#303030;stroke-width:.25" textLength="176.500" lengthAdjust="spacingAndGlyphs">Learn more about products</text>
</svg>
</body></html>
